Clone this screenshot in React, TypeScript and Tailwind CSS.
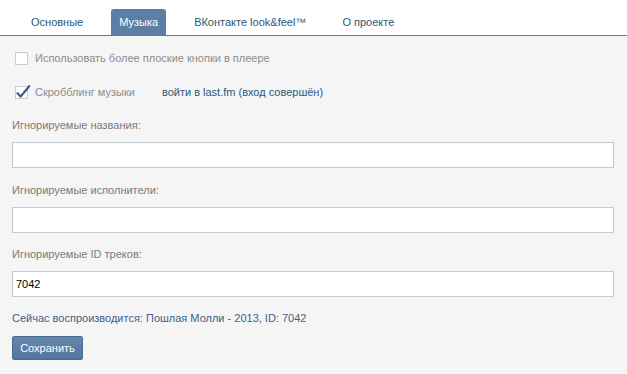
import { Fragment } from 'react'

const tabs = ['Основные', 'Музыка', 'ВКонтакте look&feel™', 'О проекте']

function Checkbox({ checked }: { checked?: boolean }) {
  return (
    <span className="relative block h-[13px] w-[13px] shrink-0 border border-[#c5cdd6] bg-white">
      {checked && (
        <svg className="absolute -left-[1px] -top-[4px]" width="17" height="17" viewBox="0 0 17 17" aria-hidden>
          <path d="M2.5 10.2 L5.6 13.6 L14.2 3.2" fill="none" stroke="#3b5b82" strokeWidth="2.2" strokeLinecap="round" strokeLinejoin="round" />
        </svg>
      )}
    </span>
  )
}

function Field({ label, value, className }: { label: string; value?: string; className: string }) {
  return (
    <Fragment>
      <div className={'leading-[14px] text-[#7a7a7a] ' + className}>{label}</div>
      <input
        readOnly
        value={value ?? ''}
        className="mt-[10px] h-[26px] w-[602px] border border-[#c0cad5] bg-white px-[3px] text-[11px] text-black outline-none"
        style={{ fontFamily: 'inherit' }}
      />
    </Fragment>
  )
}

export default function App() {
  return (
    <div className="h-[374px] w-[627px] bg-[#f5f5f5] text-[11px]" style={{ fontFamily: '"Liberation Sans", "DejaVu Sans", sans-serif' }}>
      <div className="flex h-[36px] items-end gap-[20px] border-b border-[#5b7ba3] bg-white pl-[23px]">
        {tabs.map((t, i) =>
          i === 1 ? (
            <div key={t} className="flex h-[26px] items-center rounded-t-[3px] bg-[#5b7ea7] px-[8px] text-white">
              {t}
            </div>
          ) : (
            <div key={t} className="flex h-[26px] items-center px-[8px] text-[#2b587a]">
              {t}
            </div>
          ),
        )}
      </div>

      <div className="flex flex-col pl-[12px]">
        <div className="mt-[16px] flex h-[13px] items-center pl-[3px]">
          <Checkbox />
          <span className="ml-[7px] text-[#8c8c8c]">Использовать более плоские кнопки в плеере</span>
        </div>
        <div className="mt-[21px] flex h-[13px] items-center pl-[3px]">
          <Checkbox checked />
          <span className="ml-[7px] text-[#8c8c8c]">Скробблинг музыки</span>
          <span className="ml-[27px] text-[#2b587a]">войти в last.fm (вход совершён)</span>
        </div>

        <Field label="Игнорируемые названия:" className="mt-[19px]" />
        <Field label="Игнорируемые исполнители:" className="mt-[15px]" />
        <Field label="Игнорируемые ID треков:" value="7042" className="mt-[14px]" />

        <div className="mt-[14px] leading-[14px] text-[#3d6287]">Сейчас воспроизводится: Пошлая Молли - 2013, ID: 7042</div>

        <div className="mt-[11px]">
          <button className="h-[24px] w-[71px] rounded-[2px] border border-[#4a6c95] bg-gradient-to-b from-[#6687ad] to-[#52749e] text-[11px] text-white">
            Сохранить
          </button>
        </div>
      </div>
    </div>
  )
}
